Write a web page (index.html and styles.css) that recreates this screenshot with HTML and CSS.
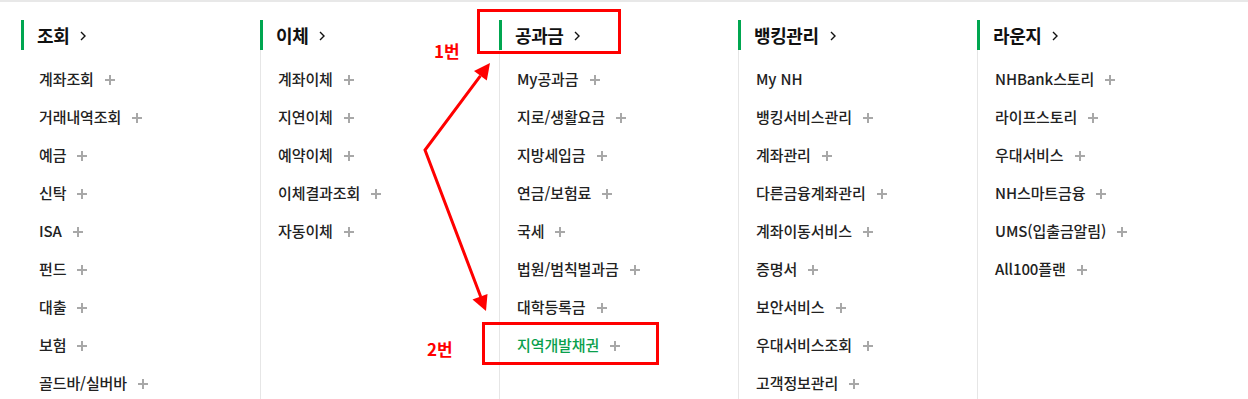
FILE: index.html
```html
<!DOCTYPE html>
<html lang="ko">
<head>
<meta charset="utf-8">
<title>메뉴</title>
<link rel="stylesheet" href="styles.css">
</head>
<body>
<div class="topbar"></div>
<div class="menu">
  <section class="col first">
    <h2 class="head"><span>조회</span><svg class="chev" viewBox="0 0 6 10" width="6" height="10"><path d="M1 1l4 4-4 4" fill="none" stroke="#111" stroke-width="1.4"/></svg></h2>
    <ul class="list">
      <li><span>계좌조회</span><i class="plus"></i></li>
      <li><span>거래내역조회</span><i class="plus"></i></li>
      <li><span>예금</span><i class="plus"></i></li>
      <li><span>신탁</span><i class="plus"></i></li>
      <li><span>ISA</span><i class="plus"></i></li>
      <li><span>펀드</span><i class="plus"></i></li>
      <li><span>대출</span><i class="plus"></i></li>
      <li><span>보험</span><i class="plus"></i></li>
      <li><span>골드바/실버바</span><i class="plus"></i></li>
    </ul>
  </section>
  <section class="col">
    <h2 class="head"><span>이체</span><svg class="chev" viewBox="0 0 6 10" width="6" height="10"><path d="M1 1l4 4-4 4" fill="none" stroke="#111" stroke-width="1.4"/></svg></h2>
    <ul class="list">
      <li><span>계좌이체</span><i class="plus"></i></li>
      <li><span>지연이체</span><i class="plus"></i></li>
      <li><span>예약이체</span><i class="plus"></i></li>
      <li><span>이체결과조회</span><i class="plus"></i></li>
      <li><span>자동이체</span><i class="plus"></i></li>
    </ul>
  </section>
  <section class="col">
    <h2 class="head"><span>공과금</span><svg class="chev" viewBox="0 0 6 10" width="6" height="10"><path d="M1 1l4 4-4 4" fill="none" stroke="#111" stroke-width="1.4"/></svg></h2>
    <ul class="list">
      <li><span>My공과금</span><i class="plus"></i></li>
      <li><span>지로/생활요금</span><i class="plus"></i></li>
      <li><span>지방세입금</span><i class="plus"></i></li>
      <li><span>연금/보험료</span><i class="plus"></i></li>
      <li><span>국세</span><i class="plus"></i></li>
      <li><span>법원/범칙벌과금</span><i class="plus"></i></li>
      <li><span>대학등록금</span><i class="plus"></i></li>
      <li class="on"><span>지역개발채권</span><i class="plus"></i></li>
    </ul>
  </section>
  <section class="col">
    <h2 class="head"><span>뱅킹관리</span><svg class="chev" viewBox="0 0 6 10" width="6" height="10"><path d="M1 1l4 4-4 4" fill="none" stroke="#111" stroke-width="1.4"/></svg></h2>
    <ul class="list">
      <li><span>My NH</span></li>
      <li><span>뱅킹서비스관리</span><i class="plus"></i></li>
      <li><span>계좌관리</span><i class="plus"></i></li>
      <li><span>다른금융계좌관리</span><i class="plus"></i></li>
      <li><span>계좌이동서비스</span><i class="plus"></i></li>
      <li><span>증명서</span><i class="plus"></i></li>
      <li><span>보안서비스</span><i class="plus"></i></li>
      <li><span>우대서비스조회</span><i class="plus"></i></li>
      <li><span>고객정보관리</span><i class="plus"></i></li>
    </ul>
  </section>
  <section class="col">
    <h2 class="head"><span>라운지</span><svg class="chev" viewBox="0 0 6 10" width="6" height="10"><path d="M1 1l4 4-4 4" fill="none" stroke="#111" stroke-width="1.4"/></svg></h2>
    <ul class="list">
      <li><span>NHBank스토리</span><i class="plus"></i></li>
      <li><span>라이프스토리</span><i class="plus"></i></li>
      <li><span>우대서비스</span><i class="plus"></i></li>
      <li><span>NH스마트금융</span><i class="plus"></i></li>
      <li><span>UMS(입출금알림)</span><i class="plus"></i></li>
      <li><span>All100플랜</span><i class="plus"></i></li>
    </ul>
  </section>
</div>
<svg class="notes" width="1248" height="399" viewBox="0 0 1248 399">
  <rect x="478.5" y="10.5" width="141" height="42" fill="none" stroke="#ff0000" stroke-width="3"/>
  <rect x="483.5" y="323.5" width="174" height="40" fill="none" stroke="#ff0000" stroke-width="3"/>
  <polyline points="480.4,75.8 425,150 480.8,297" fill="none" stroke="#ff0000" stroke-width="3" stroke-linejoin="miter"/>
  <polygon points="490,63 486.8,80.6 474,71" fill="#ff0000"/>
  <polygon points="486,311 487.5,294 472.5,299.6" fill="#ff0000"/>
  <text class="note" x="434" y="58">1번</text>
  <text class="note" x="427" y="356">2번</text>
</svg>
</body>
</html>
```

FILE: styles.css
```css
html, body {
  margin: 0;
  padding: 0;
  background: #fff;
}
body {
  width: 1248px;
  height: 399px;
  overflow: hidden;
  position: relative;
  font-family: "Noto Sans CJK KR", "Noto Sans", sans-serif;
  color: #333;
}
.topbar {
  height: 2px;
  background: #e8e8e8;
}
.menu {
  display: grid;
  grid-template-columns: repeat(5, 239px);
  padding: 18px 0 0 21px;
  height: 379px;
  box-sizing: border-box;
}
.col {
  border-left: 1px solid #e6e6e6;
}
.col.first {
  border-left-color: transparent;
}
.head {
  margin: 0 0 0 -1px;
  height: 30px;
  border-left: 3px solid #00a650;
  padding-left: 13px;
  display: flex;
  align-items: center;
  gap: 11px;
  font-size: 18px;
  font-weight: 700;
  letter-spacing: -0.4px;
  color: #111;
  line-height: 30px;
}
.chev {
  display: block;
  margin-top: 1px;
}
.list {
  list-style: none;
  margin: 9px 0 0;
  padding: 0 0 0 17px;
}
.list li {
  height: 38px;
  display: flex;
  align-items: center;
  font-size: 15px;
  font-weight: 500;
  letter-spacing: -0.1px;
  color: #222;
}
.list li.on {
  color: #0a9f4c;
}
.plus {
  position: relative;
  width: 10px;
  height: 10px;
  margin-left: 11px;
  margin-top: 3px;
}
.plus::before,
.plus::after {
  content: "";
  position: absolute;
  background: #a8a8a8;
}
.plus::before {
  left: 0;
  top: 4px;
  width: 10px;
  height: 2px;
}
.plus::after {
  left: 4px;
  top: 0;
  width: 2px;
  height: 10px;
}
.notes {
  position: absolute;
  left: 0;
  top: 0;
  pointer-events: none;
}
.note {
  font-family: "Noto Sans CJK KR", sans-serif;
  font-size: 17px;
  font-weight: 700;
  fill: #ff0000;
}
```
